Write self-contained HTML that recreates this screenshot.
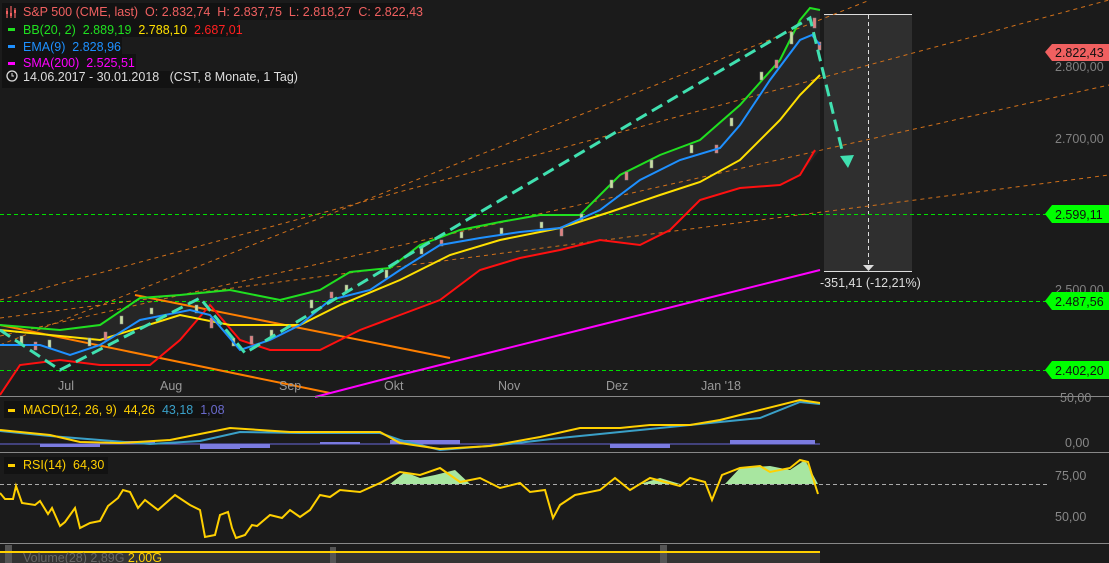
<!DOCTYPE html>
<html><head><meta charset="utf-8"><style>
body{margin:0;background:#1b1b1b;width:1109px;height:563px;overflow:hidden;font-family:"Liberation Sans",sans-serif}
svg{display:block}
text{font-family:"Liberation Sans",sans-serif;font-size:12.5px}
</style></head><body>
<svg width="1109" height="563" viewBox="0 0 1109 563">
<rect width="1109" height="563" fill="#1b1b1b"/>
<polygon points="0,325 60,330 100,325 140,298 180,295 230,290 280,300 320,290 350,272 390,268 420,245 460,230 500,222 540,215 580,215 620,175 660,155 700,140 740,105 780,60 800,20 810,8 820,10 820,150 800,175 780,185 740,188 700,200 670,230 640,245 600,240 560,250 520,258 480,270 440,300 400,315 360,330 320,350 270,350 240,340 210,305 180,340 150,365 100,365 60,360 20,365 0,395" fill="#262626"/>
<rect x="824" y="14" width="88" height="257" fill="#2f2f2f"/>
<line x1="824" y1="14.5" x2="912" y2="14.5" stroke="#ddd"/>
<line x1="824" y1="271.5" x2="912" y2="271.5" stroke="#ddd"/>
<line x1="868.5" y1="15" x2="868.5" y2="266" stroke="#ddd" stroke-dasharray="4,3"/>
<polygon points="863,265 874,265 868.5,271" fill="#ddd"/>
<text x="820" y="287" fill="#ddd">-351,41 (-12,21%)</text>
<g stroke="#00e000" stroke-dasharray="4,3" stroke-width="1">
<line x1="0" y1="214.5" x2="1050" y2="214.5"/>
<line x1="0" y1="301.5" x2="1050" y2="301.5"/>
<line x1="0" y1="370.5" x2="1050" y2="370.5"/>
</g>
<g stroke="#d0701a" stroke-dasharray="4,4" stroke-width="1" fill="none">
<line x1="0" y1="345" x2="870" y2="0"/>
<line x1="0" y1="300" x2="1109" y2="0"/>
<line x1="0" y1="336" x2="1109" y2="85"/>
<line x1="0" y1="318" x2="1109" y2="175"/>
</g>
<line x1="135" y1="295" x2="450" y2="358" stroke="#ff7f00" stroke-width="2"/>
<line x1="0" y1="325" x2="330" y2="393" stroke="#ff7f00" stroke-width="2"/>
<polyline points="315,397 400,375 500,350 600,325 700,300 780,280 820,270" fill="none" stroke="#ff00ff" stroke-width="2"/>
<polyline points="0,395 20,365 60,360 100,365 150,365 180,340 210,305 240,340 270,350 320,350 360,330 400,315 440,300 480,270 520,258 560,250 600,240 640,245 670,230 700,200 740,188 780,185 800,175 815,150" fill="none" stroke="#ff1010" stroke-width="2"/>
<polyline points="0,330 100,340 180,315 230,325 300,325 340,305 400,280 450,255 500,240 560,228 610,212 660,195 700,182 740,160 780,120 800,95 820,75" fill="none" stroke="#ffe000" stroke-width="2"/>
<polyline points="0,325 60,330 100,325 140,298 180,295 230,290 280,300 320,290 350,272 390,268 420,245 460,230 500,222 540,215 580,215 620,175 660,155 700,140 740,105 780,60 800,20 810,8 820,10" fill="none" stroke="#20e020" stroke-width="2"/>
<!-- candles -->
<g fill="#c8e0a0" stroke="#888" stroke-width="0.5">
<rect x="20" y="336" width="3" height="8"/><rect x="48" y="340" width="3" height="8"/><rect x="88" y="338" width="3" height="8"/><rect x="120" y="316" width="3" height="8"/><rect x="150" y="308" width="3" height="6"/><rect x="195" y="305" width="3" height="8"/><rect x="232" y="338" width="3" height="8"/><rect x="270" y="330" width="3" height="8"/><rect x="310" y="300" width="3" height="8"/><rect x="345" y="285" width="3" height="6"/><rect x="385" y="270" width="3" height="8"/><rect x="420" y="248" width="3" height="6"/><rect x="460" y="232" width="3" height="6"/><rect x="500" y="228" width="3" height="6"/><rect x="540" y="222" width="3" height="6"/><rect x="580" y="214" width="3" height="6"/><rect x="610" y="180" width="3" height="8"/><rect x="650" y="160" width="3" height="8"/><rect x="690" y="145" width="3" height="8"/><rect x="730" y="118" width="3" height="8"/><rect x="760" y="72" width="3" height="8"/><rect x="790" y="32" width="3" height="12"/>
</g>
<g fill="#e08080" stroke="#888" stroke-width="0.5">
<rect x="34" y="342" width="3" height="8"/><rect x="104" y="332" width="3" height="8"/><rect x="210" y="318" width="3" height="10"/><rect x="250" y="336" width="3" height="8"/><rect x="330" y="292" width="3" height="6"/><rect x="440" y="240" width="3" height="6"/><rect x="560" y="228" width="3" height="8"/><rect x="625" y="172" width="3" height="8"/><rect x="715" y="145" width="3" height="8"/><rect x="775" y="60" width="3" height="8"/><rect x="813" y="18" width="3" height="10"/><rect x="818" y="42" width="3" height="8"/>
</g>
<polyline points="0,345 40,345 70,355 100,345 140,320 190,310 210,315 240,350 270,340 300,325 330,300 370,290 400,270 440,245 480,238 520,232 560,228 600,210 640,180 680,160 720,148 740,125 770,80 800,40 812,35 820,45" fill="none" stroke="#1e90ff" stroke-width="2"/>
<polyline points="0,330 60,370 200,298 245,353 470,218 810,18 842,150" fill="none" stroke="#40e0b0" stroke-width="3" stroke-dasharray="12,6"/>
<polygon points="840,156 854,155 848,168" fill="#40e0b0"/>
<g fill="#999" font-size="12">
<text x="58" y="390">Jul</text><text x="160" y="390">Aug</text><text x="279" y="390">Sep</text><text x="384" y="390">Okt</text><text x="498" y="390">Nov</text><text x="606" y="390">Dez</text><text x="701" y="390">Jan '18</text>
</g>
<g fill="#808080" font-size="12.5">
<text x="1055" y="71">2.800,00</text><text x="1055" y="143">2.700,00</text><text x="1055" y="294">2.500,00</text>
</g>
<polygon points="1045,52 1052,44 1109,44 1109,61 1052,61" fill="#f06060"/>
<text x="1055" y="57" fill="#111">2.822,43</text>
<g fill="#00ff00"><polygon points="1045,214 1052,205 1109,205 1109,223 1052,223"/><polygon points="1045,301 1052,292 1109,292 1109,310 1052,310"/><polygon points="1045,370 1052,361 1109,361 1109,379 1052,379"/></g>
<g fill="#111"><text x="1055" y="219">2.599,11</text><text x="1055" y="306">2.487,56</text><text x="1055" y="375">2.402,20</text></g>
<!-- legend -->
<g fill="#121212">
<rect x="2" y="3" width="408" height="17"/><rect x="2" y="20" width="236" height="17"/><rect x="2" y="37" width="120" height="17"/><rect x="2" y="54" width="134" height="17"/><rect x="2" y="71" width="292" height="17"/>
</g>
<g>
<text x="23" y="16" fill="#f06060" xml:space="preserve">S&amp;P 500 (CME, last)  O: 2.832,74  H: 2.837,75  L: 2.818,27  C: 2.822,43</text>
<path d="M7 8v10M11 6v12M15 8v10" stroke="#f06060" stroke-width="1.2"/><rect x="6" y="11" width="2" height="3" fill="#f06060"/><rect x="10" y="13" width="2" height="3" fill="#f06060"/><rect x="14" y="10" width="2" height="3" fill="#f06060"/>
<rect x="8" y="28" width="7" height="3" fill="#20e020"/>
<text x="23" y="34" fill="#20e020" xml:space="preserve">BB(20, 2)  2.889,19  <tspan fill="#ffe000">2.788,10</tspan>  <tspan fill="#ff2020">2.687,01</tspan></text>
<rect x="8" y="45" width="7" height="3" fill="#1e90ff"/>
<text x="23" y="51" fill="#1e90ff" xml:space="preserve">EMA(9)  2.828,96</text>
<rect x="8" y="62" width="7" height="3" fill="#ff00ff"/>
<text x="23" y="67" fill="#ff00ff" xml:space="preserve">SMA(200)  2.525,51</text>
<circle cx="12" cy="76" r="5" fill="none" stroke="#ddd" stroke-width="1.3"/><path d="M12 73v3h2" stroke="#ddd" fill="none"/>
<text x="23" y="81" fill="#ddd" xml:space="preserve">14.06.2017 - 30.01.2018   (CST, 8 Monate, 1 Tag)</text>
</g>
<line x1="0" y1="396.5" x2="1109" y2="396.5" stroke="#888"/>
<line x1="0" y1="452.5" x2="1109" y2="452.5" stroke="#888"/>
<line x1="0" y1="543.5" x2="1109" y2="543.5" stroke="#888"/>
<text x="1060" y="402" fill="#888">50,00</text>
<text x="1065" y="447" fill="#888">0,00</text>
<rect x="4" y="401" width="218" height="17" fill="#121212"/>
<rect x="8" y="409" width="7" height="3" fill="#ffd000"/>
<text x="23" y="414" fill="#ffd000" xml:space="preserve">MACD(12, 26, 9)  44,26  <tspan fill="#3aa0c8">43,18</tspan>  <tspan fill="#6a6acc">1,08</tspan></text>
<line x1="0" y1="444" x2="820" y2="444" stroke="#6a6adc" stroke-width="1"/>
<path d="M40,444h60v3h-60zM110,441h45v3h-45zM200,444h40v5h-40zM240,444h30v4h-30zM390,440h70v4h-70zM610,444h60v4h-60zM730,440h85v4h-85zM320,442h40v2h-40z" fill="#7b7be0"/>
<polyline points="0,431 50,436 100,440 150,444 200,441 240,432 300,433 380,433 400,440 440,450 500,445 560,438 600,434 640,430 680,426 720,422 760,418 800,402 820,404" fill="none" stroke="#3aa0c8" stroke-width="2"/>
<polyline points="0,430 50,435 80,442 120,443 170,440 230,428 290,432 380,432 400,443 440,449 490,446 540,437 580,428 620,428 650,425 690,425 720,420 760,410 800,400 820,403" fill="none" stroke="#ffd000" stroke-width="2"/>
<rect x="4" y="457" width="104" height="17" fill="#121212"/>
<rect x="8" y="464" width="7" height="3" fill="#ffd000"/>
<text x="23" y="469" fill="#ffd000" xml:space="preserve">RSI(14)  64,30</text>
<text x="1055" y="480" fill="#888">75,00</text><text x="1055" y="521" fill="#888">50,00</text>
<line x1="0" y1="484.5" x2="1050" y2="484.5" stroke="#aaa" stroke-dasharray="4,3"/>
<path d="M390,484 405,472 420,478 435,475 455,470 470,484Z M640,484 660,478 680,484Z M725,484 740,468 770,466 790,470 805,460 818,484Z" fill="#a8e6a0"/>
<polyline points="0,493 5,499 13,499 16,486 22,503 35,505 40,501 48,514 52,508 60,526 65,522 75,508 80,528 90,523 100,521 108,506 118,498 123,490 130,492 138,508 145,500 158,510 175,495 190,505 200,510 205,537 215,535 220,515 228,512 232,528 236,538 245,535 252,525 257,526 270,515 282,518 290,510 300,517 310,510 320,495 330,497 340,490 360,492 380,483 400,472 420,475 440,468 460,482 480,478 500,488 520,483 530,492 545,490 553,518 560,505 575,495 600,490 615,478 630,490 650,478 680,486 690,478 705,482 712,500 722,475 740,468 760,466 770,472 790,468 800,460 808,462 812,475 818,494" fill="none" stroke="#ffd000" stroke-width="2"/>
<rect x="0" y="551" width="820" height="12" fill="#333"/>
<rect x="5" y="545" width="7" height="18" fill="#555"/><rect x="660" y="545" width="7" height="18" fill="#555"/><rect x="330" y="547" width="6" height="16" fill="#555"/>
<line x1="0" y1="552" x2="820" y2="552" stroke="#ffd000" stroke-width="2"/>
<text x="23" y="562" fill="#666">Volume(28) 2,89G <tspan fill="#ffd000">2,00G</tspan></text>
</svg>
</body></html>
